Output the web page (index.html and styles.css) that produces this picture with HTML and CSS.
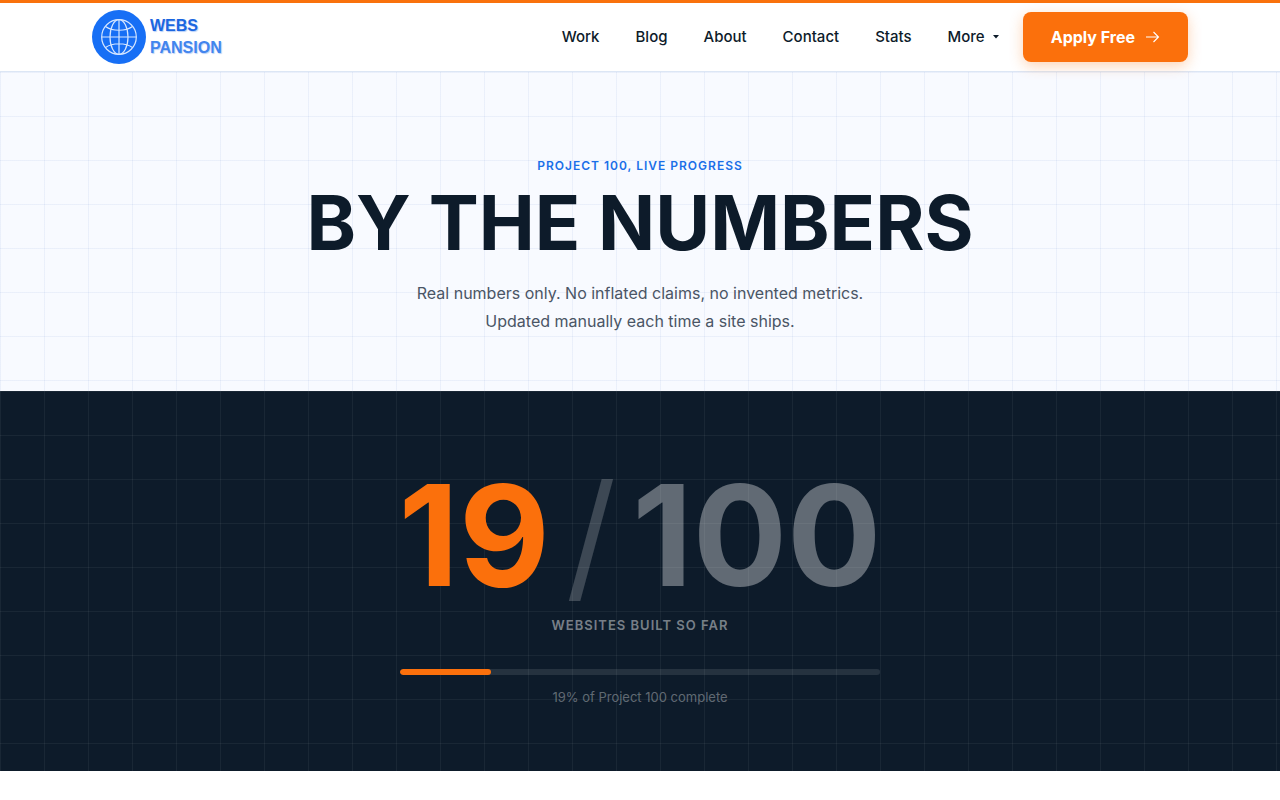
FILE: index.html
```html
<!DOCTYPE html>
<html lang="en">
<head>
    <meta charset="UTF-8" />
    <meta name="viewport" content="width=device-width, initial-scale=1.0" />
    <title>Stats | Webspansion</title>
    <link rel="stylesheet" href="styles.css">
</head>
<body>
    <header class="header">
        <div class="header-inner">
            <a href="index.html" class="logo">
                <svg class="logo-mark" viewBox="0 0 54 54" aria-hidden="true">
                    <circle cx="27" cy="27" r="27" fill="#176ff5" />
                    <g fill="none" stroke="#d5e6ff" stroke-width="1.2">
                        <circle cx="27" cy="27" r="17.3" />
                        <ellipse cx="27" cy="27" rx="9" ry="17.3" />
                        <path d="M27 9.7v34.6M9.7 27h34.6M13.5 16.5c7 5 20 5 27 0M13.5 37.5c7-5 20-5 27 0" />
                    </g>
                </svg>
                <span class="logo-text">
                    <span class="logo-top">WEBS</span>
                    <span class="logo-bottom">PANSION</span>
                </span>
            </a>
            <nav class="nav">
                <a href="work.html">Work</a>
                <a href="blog.html">Blog</a>
                <a href="about.html">About</a>
                <a href="contact.html">Contact</a>
                <a href="stats.html">Stats</a>
                <button type="button" class="more">More
                    <svg width="6" height="4" viewBox="0 0 6 4" aria-hidden="true"><path d="M0 0h6L3 3.5z" fill="currentColor" /></svg>
                </button>
            </nav>
            <a href="apply.html" class="apply">Apply Free
                <svg width="15" height="12" viewBox="0 0 15 12" fill="none" stroke="currentColor" stroke-width="1.1" aria-hidden="true"><path d="M1 6h12.5M8.5 1l5 5-5 5" /></svg>
            </a>
        </div>
    </header>

    <main>
        <!-- Page intro -->
        <section class="hero">
            <p class="eyebrow">PROJECT 100, LIVE PROGRESS</p>
            <h1>BY THE NUMBERS</h1>
            <p class="intro">Real numbers only. No inflated claims, no invented metrics. Updated manually each time a site ships.</p>
        </section>

        <!-- Counter -->
        <section class="counter">
            <div class="count">
                <span class="count-now">19</span>
                <span class="count-slash">/</span>
                <span class="count-goal">100</span>
            </div>
            <p class="count-label">WEBSITES BUILT SO FAR</p>
            <div class="bar">
                <div class="bar-fill" style="width: 19%"></div>
            </div>
            <p class="bar-note">19% of Project 100 complete</p>
        </section>
    </main>
</body>
</html>
```
FILE: styles.css
```css
* {
    box-sizing: border-box;
}
body {
    margin: 0;
    font-family: Inter, "Liberation Sans", sans-serif;
    background-color: #fff;
    color: #0d1b2a;
}
h1, p {
    margin: 0;
}

/* Header */
.header {
    position: sticky;
    top: 0;
    z-index: 10;
    background-color: #fff;
    border-top: 3px solid #f9710c;
    border-bottom: 1px solid #dce6f5;
}
.header-inner {
    max-width: 1160px;
    height: 68px;
    margin: 0 auto;
    padding: 0 32px;
    display: flex;
    align-items: center;
}
.logo {
    display: flex;
    align-items: center;
    gap: 4px;
    margin-right: auto;
    text-decoration: none;
}
.logo-mark {
    width: 54px;
    height: 54px;
}
.logo-text {
    display: flex;
    flex-direction: column;
    font-family: "Liberation Sans Narrow", "Liberation Sans", sans-serif;
    font-size: 16px;
    font-weight: bold;
    line-height: 22px;
    text-shadow: 1px 1px 1px #b9d0f7;
}
.logo-top {
    color: #1b66e0;
}
.logo-bottom {
    color: #4285ee;
}
.nav {
    display: flex;
    align-items: center;
    gap: 36px;
}
.nav a, .more {
    font-family: inherit;
    font-size: 15px;
    font-weight: 500;
    line-height: 24px;
    color: #0d1b2a;
    text-decoration: none;
}
.more {
    display: flex;
    align-items: center;
    gap: 8px;
    padding: 0;
    border: none;
    background: none;
    cursor: pointer;
}
.apply {
    display: flex;
    align-items: center;
    gap: 10px;
    height: 50px;
    margin-left: 24px;
    padding: 0 28px;
    border-radius: 8px;
    background-color: #fb700c;
    box-shadow: 0 4px 14px rgba(249, 113, 12, 0.3);
    color: #fff;
    font-size: 16px;
    font-weight: 700;
    text-decoration: none;
}

/* Hero */
.hero {
    padding: 84px 32px 56px;
    background-color: #f8faff;
    background-image:
        linear-gradient(rgba(26, 80, 180, 0.06) 1px, transparent 1px),
        linear-gradient(90deg, rgba(26, 80, 180, 0.06) 1px, transparent 1px);
    background-size: 44px 44px;
    text-align: center;
}
.eyebrow {
    color: #1a6fe8;
    font-size: 12px;
    font-weight: 600;
    line-height: 20px;
    letter-spacing: 1px;
}
h1 {
    margin-top: 8px;
    font-size: 75px;
    font-weight: 700;
    line-height: 77px;
}
.intro {
    max-width: 480px;
    margin: 18px auto 0;
    color: #4a5565;
    font-size: 16px;
    line-height: 28px;
}

/* Counter */
.counter {
    padding: 64px 32px;
    background-color: #0d1b2a;
    background-image:
        linear-gradient(rgba(255, 255, 255, 0.05) 1px, transparent 1px),
        linear-gradient(90deg, rgba(255, 255, 255, 0.05) 1px, transparent 1px);
    background-size: 44px 44px;
    text-align: center;
}
.count {
    display: flex;
    justify-content: center;
    gap: 16px;
    font-size: 140px;
    font-weight: 700;
    line-height: 160px;
}
.count-now {
    color: #fb700c;
}
.count-slash {
    color: rgba(255, 255, 255, 0.2);
    font-weight: 400;
}
.count-goal {
    color: rgba(255, 255, 255, 0.35);
}
.count-label {
    color: rgba(255, 255, 255, 0.45);
    font-size: 13px;
    font-weight: 600;
    line-height: 20px;
    letter-spacing: 1px;
}
.bar {
    max-width: 480px;
    height: 6px;
    margin: 34px auto 12px;
    border-radius: 3px;
    background-color: rgba(255, 255, 255, 0.1);
    overflow: hidden;
}
.bar-fill {
    height: 100%;
    border-radius: 3px;
    background-color: #fb700c;
}
.bar-note {
    color: rgba(255, 255, 255, 0.35);
    font-size: 13px;
    line-height: 20px;
}
```
